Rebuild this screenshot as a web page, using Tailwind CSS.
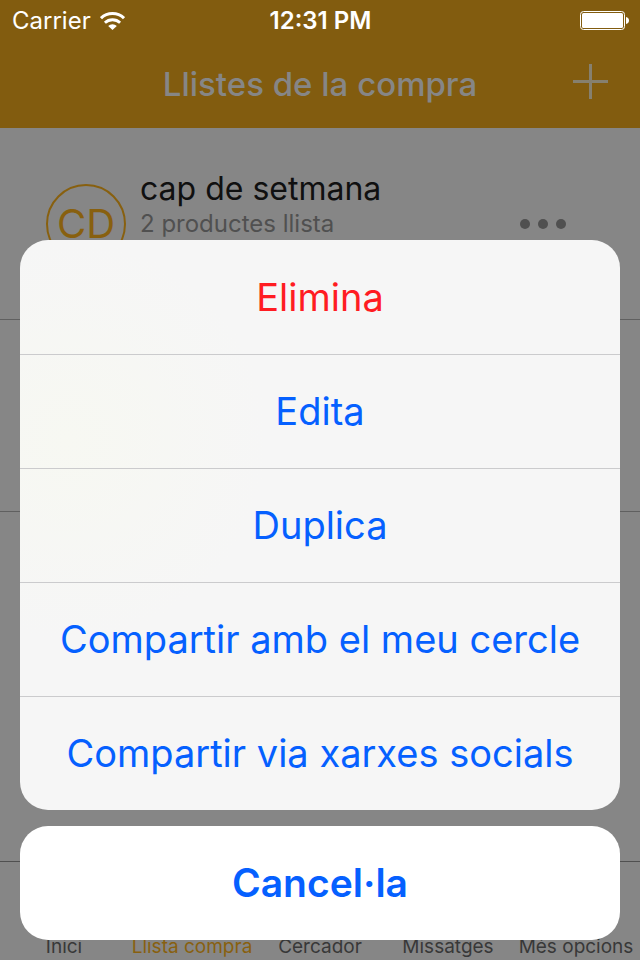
<!DOCTYPE html>
<html lang="ca">
<head>
<meta charset="utf-8">
<meta name="viewport" content="width=device-width, initial-scale=1">
<title>Llistes de la compra</title>
<script src="https://cdn.jsdelivr.net/npm/@tailwindcss/browser@4"></script>
</head>
<body class="relative flex min-h-screen flex-col overflow-hidden bg-[#868686] font-['Inter','Liberation_Sans',sans-serif]">
  <header class="bg-[#825c0f]">
    <div class="grid h-[41px] grid-cols-3 items-center pl-3 pr-[11px] text-[24px] leading-7 text-white">
      <div class="flex items-center gap-[9px]">
        <span>Carrier</span>
        <svg class="h-[18px] w-[25px]" viewBox="0 0 25 18" fill="none" stroke="#fff" aria-hidden="true">
          <path d="M1 6.200A16.600 16.600 0 0 1 24 6.200" stroke-width="3"/>
          <path d="M4.900 10.800A11 11 0 0 1 20.100 10.800" stroke-width="2.800"/>
          <path d="M12.500 18 8.200 13.900A6.100 6.100 0 0 1 16.800 13.900Z" fill="#fff" stroke="none"/>
        </svg>
      </div>
      <div class="whitespace-nowrap text-center font-semibold">12:31 PM</div>
      <svg class="h-[19px] w-[49px] justify-self-end" viewBox="0 0 49 19" aria-label="Bateria">
        <rect x=".5" y=".5" width="44" height="18" rx="3" fill="none" stroke="#fff"/>
        <rect x="2" y="2" width="41" height="15" rx="1.500" fill="#fff"/>
        <path d="M46 6c2 .4 3 1.800 3 3.500s-1 3.100-3 3.500z" fill="#fff"/>
      </svg>
    </div>
    <div class="grid h-[87px] grid-cols-[1fr_auto_1fr] items-center px-8 pb-0.5">
      <span></span>
      <h1 class="text-[33px] font-medium leading-10 text-[#868686]">Llistes de la compra</h1>
      <button type="button" aria-label="Afegeix" class="justify-self-end pb-1">
        <svg class="size-[35px]" viewBox="0 0 35 35" stroke="#86806f" stroke-width="3" aria-hidden="true"><path d="M0 17.500H35M17.500 0V35"/></svg>
      </button>
    </div>
  </header>

  <main class="flex-1">
    <ul>
      <li class="flex h-48 items-start border-b border-[#606060] pl-[46px] pr-[74px]">
        <div class="mt-14 flex size-20 items-center justify-center rounded-full border-2 border-[#88600f] text-[40px] leading-none text-[#88600f]">CD</div>
        <div class="ml-[14px] mt-10 flex-1">
          <h2 class="text-[32px] leading-[42px] text-[#101010]">cap de setmana</h2>
          <p class="text-[24px] leading-7 text-[#505050]">2 productes llista</p>
        </div>
        <button type="button" aria-label="Més accions" class="mt-[91px] flex gap-2">
          <span class="size-[10px] rounded-full bg-[#505050]"></span>
          <span class="size-[10px] rounded-full bg-[#505050]"></span>
          <span class="size-[10px] rounded-full bg-[#505050]"></span>
        </button>
      </li>
      <li class="h-48 border-b border-[#606060]"></li>
    </ul>
  </main>

  <nav class="grid h-[99px] grid-cols-5 items-end whitespace-nowrap border-t border-[#505050] text-center text-[19px] leading-[26px] text-[#383838]">
    <a href="#">Inici</a>
    <a href="#" class="text-[#88600f]" aria-current="page">Llista compra</a>
    <a href="#">Cercador</a>
    <a href="#">Missatges</a>
    <a href="#">Més opcions</a>
  </nav>

  <div role="dialog" aria-label="Opcions de la llista" class="absolute inset-x-0 bottom-0 flex flex-col gap-4 p-5 text-[38px] leading-[48px] text-[#0560ff]">
    <div class="flex flex-col overflow-hidden rounded-[28px] bg-[#f6f6f6] bg-[radial-gradient(circle_at_8%_35%,#f7f8f2,#f6f6f6_30%)]">
      <button type="button" class="h-[114px] text-[#ff1c22]">Elimina</button>
      <button type="button" class="h-[114px] border-t border-[#cbcbcd] pb-0.5">Edita</button>
      <button type="button" class="h-[114px] border-t border-[#cbcbcd] pb-0.5">Duplica</button>
      <button type="button" class="h-[114px] border-t border-[#cbcbcd] pb-0.5">Compartir amb el meu cercle</button>
      <button type="button" class="h-[114px] border-t border-[#cbcbcd] pb-0.5">Compartir via xarxes socials</button>
    </div>
    <button type="button" class="h-[114px] rounded-[28px] bg-white text-[39px] font-semibold [font-variant-ligatures:none] [font-feature-settings:'ccmp'_0,'locl'_0,'calt'_0]">Cancel·la</button>
  </div>
</body>
</html>
